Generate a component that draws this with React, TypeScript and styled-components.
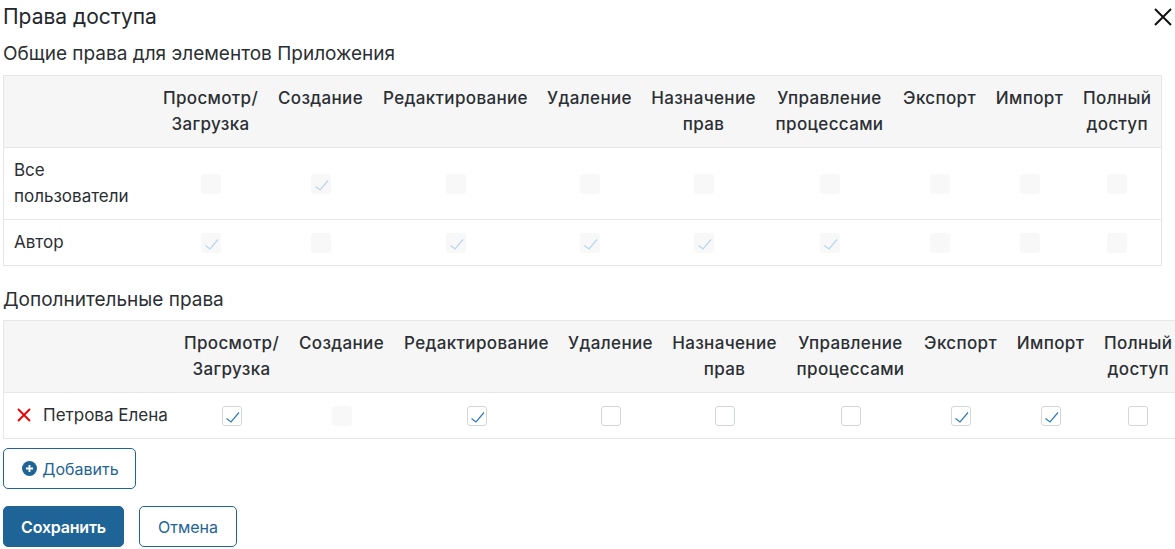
import React from 'react';
import styled, { createGlobalStyle } from 'styled-components';

const COLUMNS: { label: React.ReactNode; width: number }[] = [
  { label: <>Просмотр/<br />Загрузка</>, width: 114 },
  { label: 'Создание', width: 106 },
  { label: 'Редактирование', width: 164 },
  { label: 'Удаление', width: 104 },
  { label: <>Назначение<br />прав</>, width: 124 },
  { label: <>Управление<br />процессами</>, width: 128 },
  { label: 'Экспорт', width: 92 },
  { label: 'Импорт', width: 88 },
  { label: <>Полный<br />доступ</>, width: 88 },
];

type CellState = 'off' | 'on' | 'disabledOff' | 'disabledOn';

const d = 'disabledOff' as const;
const D = 'disabledOn' as const;

const GENERAL_ROWS: { name: React.ReactNode; cells: CellState[] }[] = [
  { name: <>Все<br />пользователи</>, cells: [d, D, d, d, d, d, d, d, d] },
  { name: 'Автор', cells: [D, d, D, D, D, D, d, d, d] },
];

const EXTRA_CELLS: CellState[] = ['on', d, 'on', 'off', 'off', 'off', 'on', 'on', 'off'];

const App: React.FC = () => (
  <Page>
    <GlobalStyle />
    <Header>
      <Title>Права доступа</Title>
      <CloseIcon width="20" height="20" viewBox="0 0 20 20">
        <path d="M2 2L18 18M18 2L2 18" stroke="#111" strokeWidth="2" fill="none" />
      </CloseIcon>
    </Header>
    <SectionTitle>Общие права для элементов Приложения</SectionTitle>
    <Table $width={1159}>
      <colgroup>
        <col style={{ width: 150 }} />
        {COLUMNS.map((c, i) => <col key={i} style={{ width: c.width }} />)}
      </colgroup>
      <thead>
        <tr>
          <HeadCell />
          {COLUMNS.map((c, i) => <HeadCell key={i}>{c.label}</HeadCell>)}
        </tr>
      </thead>
      <tbody>
        {GENERAL_ROWS.map((row, r) => (
          <tr key={r}>
            <NameCell>{row.name}</NameCell>
            {row.cells.map((state, i) => (
              <BoxCell key={i}><Check state={state} /></BoxCell>
            ))}
          </tr>
        ))}
      </tbody>
    </Table>
    <SecondTitle>Дополнительные права</SecondTitle>
    <Table $width={1179}>
      <colgroup>
        <col style={{ width: 171 }} />
        {COLUMNS.map((c, i) => <col key={i} style={{ width: c.width }} />)}
      </colgroup>
      <thead>
        <tr>
          <HeadCell />
          {COLUMNS.map((c, i) => <HeadCell key={i}>{c.label}</HeadCell>)}
        </tr>
      </thead>
      <tbody>
        <tr>
          <NameCell>
            <UserName>
              <svg width="14" height="14" viewBox="0 0 14 14">
                <path d="M1 1L13 13M13 1L1 13" stroke="#f00000" strokeWidth="1.9" fill="none" />
              </svg>
              Петрова Елена
            </UserName>
          </NameCell>
          {EXTRA_CELLS.map((state, i) => (
            <BoxCell key={i}><Check state={state} /></BoxCell>
          ))}
        </tr>
      </tbody>
    </Table>
    <AddButton>
      <svg width="15" height="15" viewBox="0 0 16 16">
        <circle cx="8" cy="8" r="8" fill="#1e6496" />
        <path d="M8 4.2V11.8M4.2 8H11.8" stroke="#fff" strokeWidth="2" />
      </svg>
      Добавить
    </AddButton>
    <Footer>
      <SaveButton>Сохранить</SaveButton>
      <CancelButton>Отмена</CancelButton>
    </Footer>
  </Page>
);

const Check: React.FC<{ state: CellState }> = ({ state }) => {
  const disabled = state === 'disabledOff' || state === 'disabledOn';
  const checked = state === 'on' || state === 'disabledOn';
  return (
    <Box $disabled={disabled}>
      {checked && (
        <svg width="18" height="18" viewBox="0 0 18 18">
          <path d="M3.5 11.5L8 15L16 5.5" stroke={disabled ? '#b8d6ee' : '#2e7dbb'} strokeWidth="1.2" fill="none" />
        </svg>
      )}
    </Box>
  );
};

export default App;

const GlobalStyle = createGlobalStyle`
  html, body {
    margin: 0;
    background: #fff;
    overflow: hidden;
  }
`;

const Page = styled.div`
  width: 1175px;
  height: 549px;
  overflow: hidden;
  padding: 0 0 0 3px;
  box-sizing: border-box;
  font-family: Inter, "Liberation Sans", sans-serif;
  font-size: 17px;
  line-height: 26px;
  color: #2b2f33;
`;

const Header = styled.div`
  display: flex;
  justify-content: space-between;
  align-items: center;
  height: 34px;
  padding-right: 2px;
`;

const Title = styled.div`
  font-size: 21px;
  line-height: 34px;
  color: #23272b;
`;

const CloseIcon = styled.svg`
  display: block;
`;

const SectionTitle = styled.div`
  font-size: 19px;
  line-height: 26px;
  height: 41px;
  padding-top: 7px;
  box-sizing: border-box;
`;

const SecondTitle = styled(SectionTitle)`
  height: 54px;
  padding-top: 21px;
`;

const Table = styled.table<{ $width: number }>`
  width: ${(p) => p.$width}px;
  table-layout: fixed;
  border-collapse: collapse;
  border: 1px solid #e4e6e8;
`;

const HeadCell = styled.th`
  background: #f6f6f6;
  font-weight: 500;
  letter-spacing: 0.35px;
  padding: 9px 0 10px;
  text-align: center;
  vertical-align: top;
  border-bottom: 1px solid #e4e6e8;
`;

const NameCell = styled.td`
  padding: 9px 10px 10px;
  vertical-align: top;
  border-top: 1px solid #e4e6e8;
`;

const BoxCell = styled.td`
  padding: 0;
  vertical-align: middle;
  border-top: 1px solid #e4e6e8;
`;

const Box = styled.span<{ $disabled: boolean }>`
  display: flex;
  align-items: center;
  justify-content: center;
  margin: 0 auto;
  width: 20px;
  height: 20px;
  box-sizing: border-box;
  border-radius: 3px;
  border: 1px solid ${(p) => (p.$disabled ? '#f8f8f8' : '#d4d7da')};
  background: ${(p) => (p.$disabled ? '#f8f8f8' : '#fff')};
`;

const UserName = styled.span`
  display: flex;
  align-items: center;
  gap: 12px;
  padding-left: 3px;
  margin-right: -10px;
  white-space: nowrap;
`;

const OutlineButton = styled.button`
  display: inline-flex;
  align-items: center;
  justify-content: center;
  height: 41px;
  box-sizing: border-box;
  background: #fff;
  border: 1px solid #1e6496;
  border-radius: 5px;
  color: #1e6496;
  font-family: inherit;
  font-size: 16px;
  padding: 0;
`;

const AddButton = styled(OutlineButton)`
  display: flex;
  width: 133px;
  gap: 5px;
  margin-top: 9px;
  padding-left: 2px;
`;

const Footer = styled.div`
  display: flex;
  gap: 15px;
  margin-top: 17px;
`;

const SaveButton = styled(OutlineButton)`
  width: 121px;
  background: #1e6496;
  color: #fff;
  font-weight: 600;
  letter-spacing: -0.2px;
`;

const CancelButton = styled(OutlineButton)`
  width: 98px;
`;
